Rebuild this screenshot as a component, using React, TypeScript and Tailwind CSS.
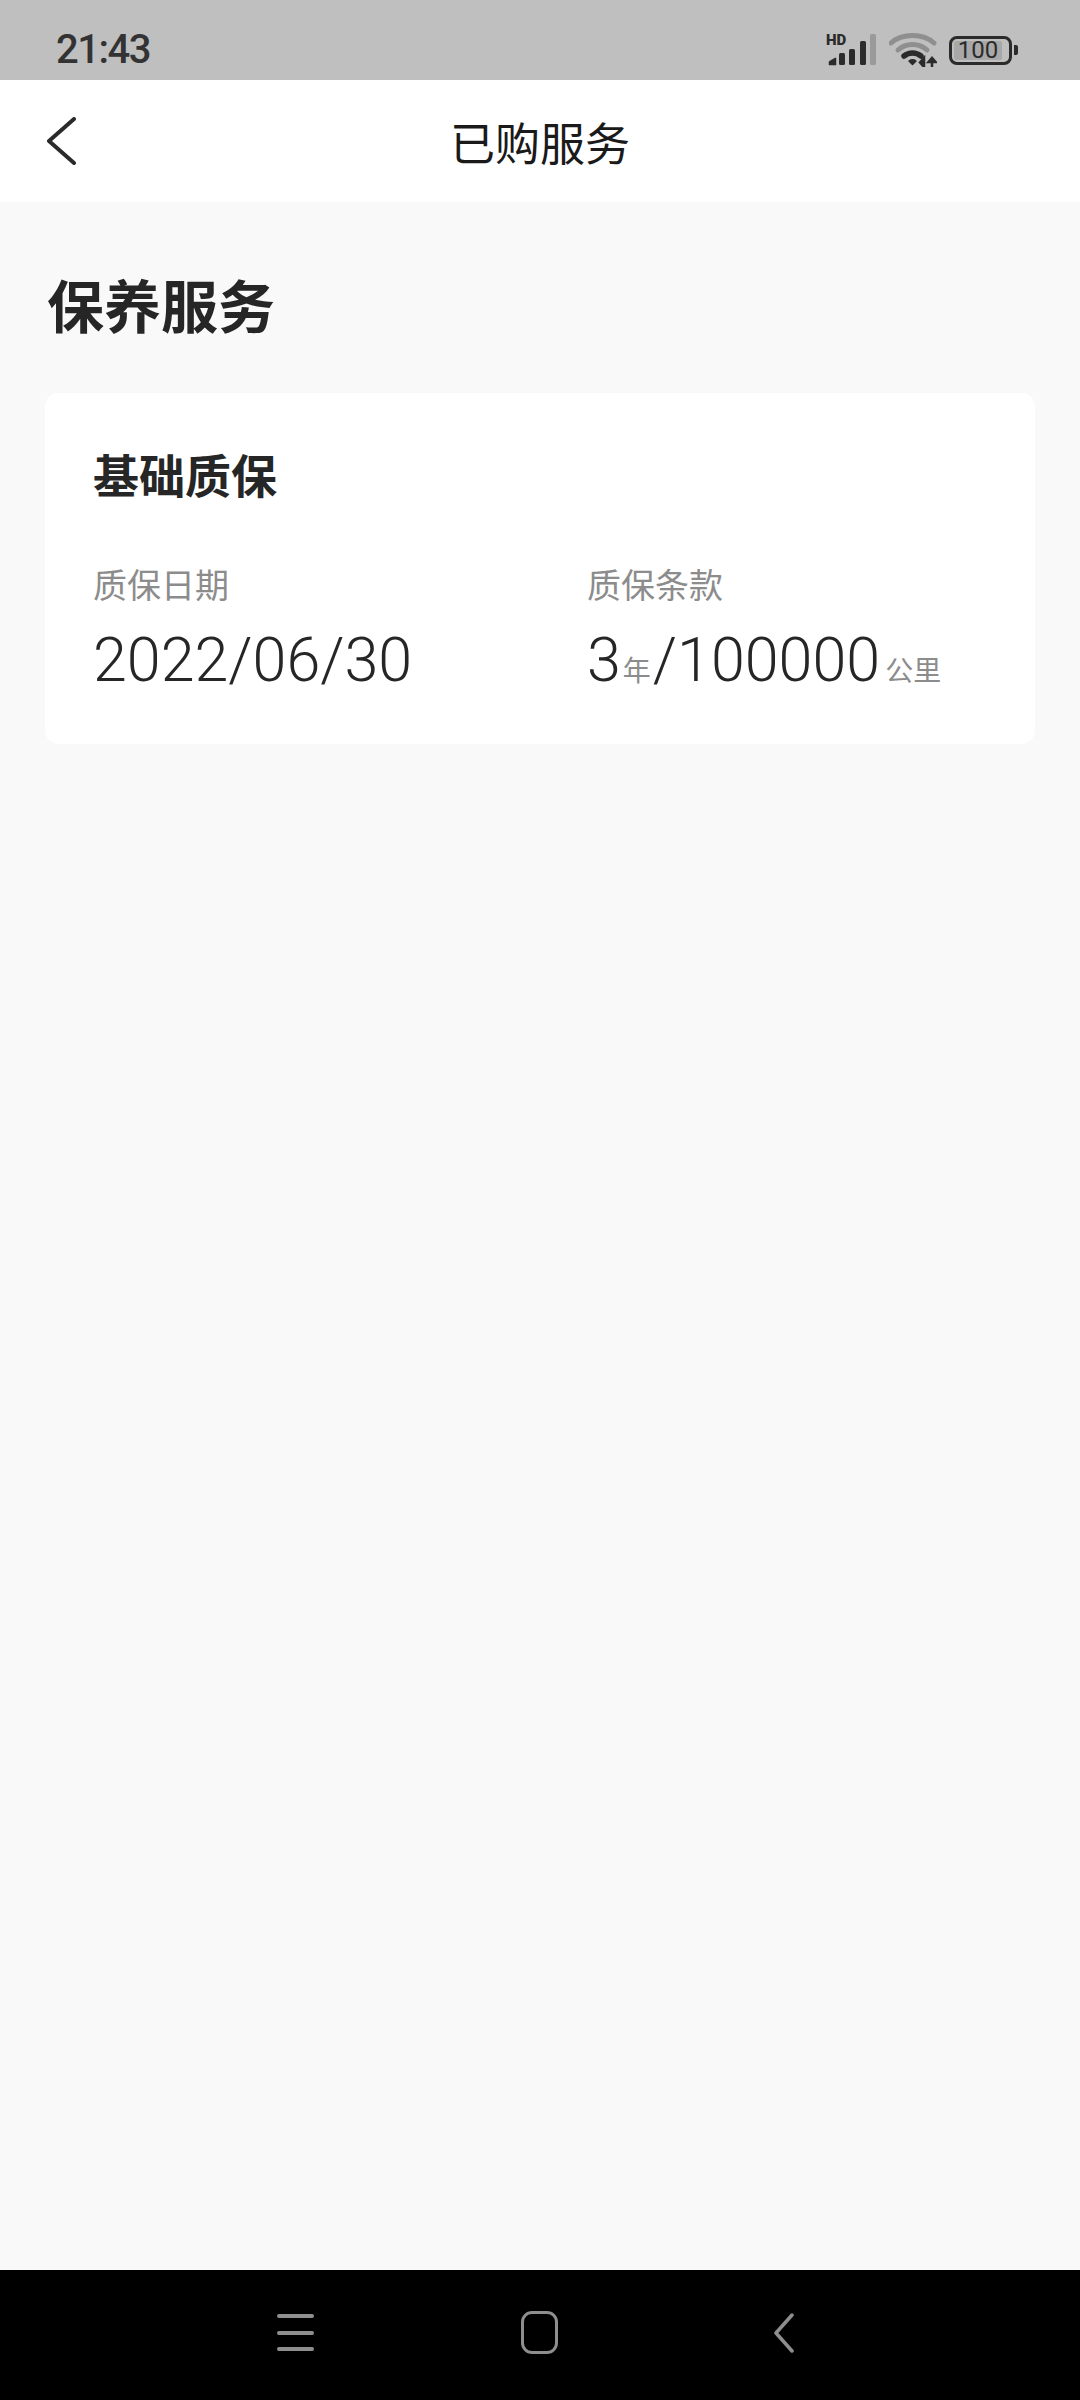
const cjk = 'font-["Noto_Sans_CJK_SC","Noto_Sans",sans-serif]';

function SignalIcon() {
  return (
    <div className="relative w-[51px] h-[32px]">
      <span className="absolute left-0 top-0 font-['Roboto',sans-serif] text-[15px] leading-[12px] font-black text-[#2b2b2b]">
        HD
      </span>
      <svg width="51" height="32" viewBox="0 0 51 32" fill="none">
        <path d="M3 31v-3.500l6-3.500h1v7z" fill="#2b2b2b" stroke="#2b2b2b" strokeWidth="0.500" />
        <rect x="13" y="19" width="6" height="12" rx="1.500" fill="#2b2b2b" />
        <rect x="23" y="15" width="6" height="16" rx="1.500" fill="#2b2b2b" />
        <rect x="34" y="7" width="6" height="24" rx="1.500" fill="#2b2b2b" />
        <rect x="44" y="0" width="6" height="31" rx="1.500" fill="#9a9a9a" />
      </svg>
    </div>
  );
}

function WifiIcon() {
  return (
    <svg width="48" height="34" viewBox="0 0 48 34" fill="none">
      <path d="M2 10C13 0 34 0 45 10" stroke="#8f8f8f" strokeWidth="5" strokeLinecap="round" />
      <path d="M9 17C17 9.500 30 9.500 38 17" stroke="#8f8f8f" strokeWidth="5" strokeLinecap="round" />
      <path d="M15 23C20 19 27 19 32 23" stroke="#2b2b2b" strokeWidth="5.500" strokeLinecap="round" />
      <path d="M20 28c2-1.500 5-1.500 7 0l-3.500 3.500z" fill="#2b2b2b" stroke="#2b2b2b" strokeWidth="1.500" strokeLinejoin="round" />
      <path d="M35 25v9M31 29.500l4 4.500 0-9zM43 34v-9M39.500 29l3.500-4 3.500 4z" stroke="#2b2b2b" strokeWidth="2.500" fill="#2b2b2b" />
    </svg>
  );
}

function Battery() {
  return (
    <div className="flex items-center">
      <div className="w-[63px] h-[29px] rounded-[8px] border-[3px] border-[#2b2b2b] p-[2px] flex">
        <div className="w-[48px] bg-[#a8a8a8] rounded-[2px] flex items-center justify-center">
          <span className="font-['Roboto',sans-serif] text-[24px] leading-none text-[#2b2b2b]">100</span>
        </div>
      </div>
      <div className="ml-[2px] w-[4px] h-[10px] rounded-r-[2px] bg-[#2b2b2b]" />
    </div>
  );
}

function StatusBar() {
  return (
    <div className="h-[80px] bg-[#bfbfbf] flex items-center justify-between pl-[56px] pr-[62px] pt-[20px]">
      <span className="font-['Roboto',sans-serif] text-[40px] leading-none font-medium text-[#333333] tracking-[-1.500px]">
        21:43
      </span>
      <div className="flex items-center gap-[12px]">
        <SignalIcon />
        <WifiIcon />
        <Battery />
      </div>
    </div>
  );
}

function NavBar() {
  return (
    <div className="h-[122px] bg-white grid grid-cols-[1fr_auto_1fr] items-center px-[46px]">
      <svg width="32" height="48" viewBox="0 0 32 48" fill="none">
        <path d="M28 2L3 24l25 22" stroke="#2a2a2a" strokeWidth="4" strokeLinecap="round" strokeLinejoin="round" />
      </svg>
      <h1 className={`${cjk} text-[45px] leading-none text-[#1a1a1a]`}>已购服务</h1>
      <div />
    </div>
  );
}

function WarrantyCard() {
  return (
    <div className="h-[351px] bg-white rounded-[14px] pl-[48px] pt-[54px] text-[#262626]">
      <h3 className={`${cjk} text-[46px] leading-[52px] font-bold`}>基础质保</h3>
      <div className="flex mt-[65px]">
        <div className="w-[494px]">
          <div className={`${cjk} text-[34px] leading-[40px] text-[#8c8c8c]`}>质保日期</div>
          <div className="mt-[23px] font-['Roboto',sans-serif] text-[61px] leading-[66px] font-light">
            2022/06/30
          </div>
        </div>
        <div>
          <div className={`${cjk} text-[34px] leading-[40px] text-[#8c8c8c]`}>质保条款</div>
          <div className="mt-[23px] flex items-baseline font-['Roboto',sans-serif] text-[61px] leading-[66px] font-light">
            <span>3</span>
            <span className={`${cjk} mx-[2px] text-[28px] font-normal text-[#8c8c8c]`}>年</span>
            <span>/100000</span>
            <span className={`${cjk} ml-[5px] text-[28px] font-normal text-[#8c8c8c]`}>公里</span>
          </div>
        </div>
      </div>
    </div>
  );
}

function BottomNav() {
  return (
    <div className="h-[130px] bg-black flex items-start pt-[44px] pl-[277px]">
      <div className="w-[37px] h-[37px] flex flex-col justify-between">
        <div className="h-[4px] rounded-full bg-[#8e8e8e]" />
        <div className="h-[4px] rounded-full bg-[#8e8e8e]" />
        <div className="h-[4px] rounded-full bg-[#8e8e8e]" />
      </div>
      <div className="ml-[207px] -mt-[3px] w-[37px] h-[43px] rounded-[11px] border-[3px] border-[#8e8e8e]" />
      <svg className="ml-[216px] -mt-[1px]" width="20" height="40" viewBox="0 0 20 40" fill="none">
        <path d="M18 2L2 20l16 18" stroke="#8e8e8e" strokeWidth="3.500" strokeLinecap="round" strokeLinejoin="round" />
      </svg>
    </div>
  );
}

export default function App() {
  return (
    <div className="w-[1080px] h-[2400px] flex flex-col bg-[#f9f9f9]">
      <StatusBar />
      <NavBar />
      <main className="flex-1 px-[45px] pt-[68px]">
        <h2 className={`${cjk} pl-[2px] text-[57px] leading-[66px] font-bold text-[#262626]`}>保养服务</h2>
        <div className="mt-[57px]">
          <WarrantyCard />
        </div>
      </main>
      <BottomNav />
    </div>
  );
}
